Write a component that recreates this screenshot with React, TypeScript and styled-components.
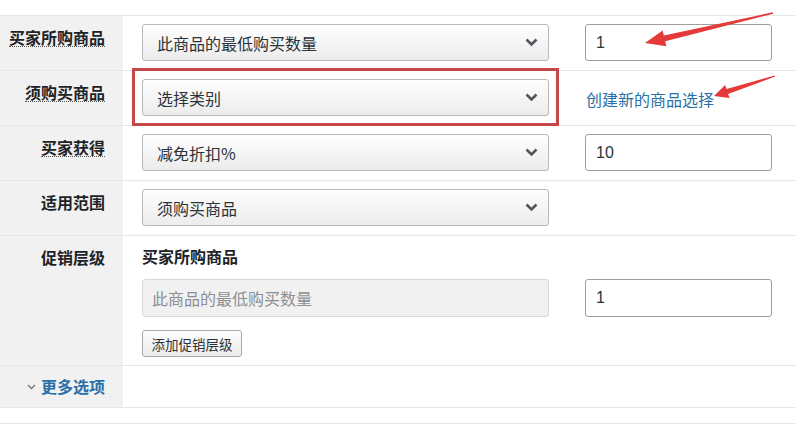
import styled, { createGlobalStyle } from 'styled-components';

const GlobalStyle = createGlobalStyle`
  body {
    margin: 0;
    background: #fff;
    font-family: "Noto Sans CJK SC", "Liberation Sans", sans-serif;
    color: #1d2327;
  }
`;

const Page = styled.div`
  position: relative;
  width: 796px;
  height: 425px;
  overflow: hidden;
  padding-top: 15px;
  box-sizing: border-box;
`;

const Table = styled.div`
  border-top: 1px solid #e6e6e6;
`;

const Row = styled.div`
  display: grid;
  grid-template-columns: 123px 1fr;
  border-bottom: 1px solid #e6e6e6;
`;

const Th = styled.div<{ $short?: boolean }>`
  background: #f1f1f1;
  text-align: right;
  font-size: 16px;
  line-height: 17px;
  padding: ${(p) => (p.$short ? '12px 18px 12px 0' : '13px 18px 0 0')};
`;

const Label = styled.span<{ $tip?: boolean }>`
  display: inline-block;
  font-size: 16px;
  font-weight: 700;
  line-height: 17px;
  color: #1d2327;
  border-bottom: 1px dotted ${(p) => (p.$tip ? '#555' : 'transparent')};
`;

const Td = styled.div<{ $stack?: boolean }>`
  display: flex;
  flex-direction: ${(p) => (p.$stack ? 'column' : 'row')};
  align-items: ${(p) => (p.$stack ? 'flex-start' : 'center')};
  gap: ${(p) => (p.$stack ? '0' : '36px')};
  padding: ${(p) => (p.$stack ? '8px 0 8px 19px' : '8px 0 9px 19px')};
`;

const Select = styled.div`
  width: 407px;
  height: 37px;
  box-sizing: border-box;
  display: flex;
  align-items: center;
  justify-content: space-between;
  padding: 0 10px 0 14px;
  border: 1px solid #b9b9b9;
  border-radius: 3px;
  background: linear-gradient(#fefefe, #ececec);
  font-size: 16px;
  color: #2c3338;
`;

const Highlight = styled.div`
  position: relative;
  &::after {
    content: '';
    position: absolute;
    top: -11px;
    left: -10px;
    right: -10px;
    bottom: -10px;
    border: 3px solid #c4474a;
    pointer-events: none;
  }
`;

const Input = styled.div<{ $disabled?: boolean; $tall?: boolean }>`
  width: ${(p) => (p.$disabled ? '407px' : '187px')};
  height: ${(p) => (p.$tall ? '38px' : '37px')};
  box-sizing: border-box;
  display: flex;
  align-items: center;
  padding-left: ${(p) => (p.$disabled ? '9px' : '10px')};
  border: 1px solid ${(p) => (p.$disabled ? '#d8d8d8' : '#9f9f9f')};
  border-radius: 3px;
  background: ${(p) => (p.$disabled ? '#f1f1f1' : '#fff')};
  color: ${(p) => (p.$disabled ? '#8c8f94' : '#2c3338')};
  font-family: "Liberation Sans", "Noto Sans CJK SC", sans-serif;
  font-size: 16px;
`;

const Link = styled.a`
  font-size: 16px;
  color: #2a6fa8;
  text-decoration: none;
  margin-left: 1px;
  padding-top: 3px;
`;

const SubHeading = styled.div`
  font-size: 16px;
  font-weight: 700;
  line-height: 22px;
  margin-top: 1px;
`;

const FieldLine = styled.div`
  display: flex;
  gap: 36px;
  margin-top: 12px;
`;

const Button = styled.button`
  margin-top: 13px;
  height: 27px;
  width: 100px;
  padding: 0;
  border: 1px solid #a9a9a9;
  border-radius: 3px;
  background: linear-gradient(#fdfdfd, #ececec);
  font-family: "Noto Sans CJK SC", sans-serif;
  font-size: 13.5px;
  color: #2c3338;
`;

const MoreToggle = styled.a`
  display: flex;
  justify-content: flex-end;
  align-items: center;
  gap: 5px;
  height: 17px;
  font-size: 16px;
  font-weight: 700;
  line-height: 17px;
  color: #2a6fa8;
  text-decoration: none;
`;

const FooterLine = styled.div`
  margin-top: 15px;
  border-top: 1px solid #e6e6e6;
`;

const Overlay = styled.svg`
  position: absolute;
  left: 0;
  top: 0;
  pointer-events: none;
`;

function Chevron() {
  return (
    <svg width="13" height="9" viewBox="0 0 13 9">
      <path d="M1.5 1.5 L6.5 6.5 L11.5 1.5" fill="none" stroke="#50575e" strokeWidth="2.6" />
    </svg>
  );
}

function DropDown({ value }: { value: string }) {
  return (
    <Select>
      <span>{value}</span>
      <Chevron />
    </Select>
  );
}

export default function App() {
  return (
    <Page>
      <GlobalStyle />
      <Table>
        <Row>
          <Th><Label $tip>买家所购商品</Label></Th>
          <Td>
            <DropDown value="此商品的最低购买数量" />
            <Input>1</Input>
          </Td>
        </Row>
        <Row>
          <Th><Label $tip>须购买商品</Label></Th>
          <Td>
            <Highlight>
              <DropDown value="选择类别" />
            </Highlight>
            <Link href="#">创建新的商品选择</Link>
          </Td>
        </Row>
        <Row>
          <Th><Label $tip>买家获得</Label></Th>
          <Td>
            <DropDown value="减免折扣%" />
            <Input>10</Input>
          </Td>
        </Row>
        <Row>
          <Th><Label>适用范围</Label></Th>
          <Td>
            <DropDown value="须购买商品" />
          </Td>
        </Row>
        <Row>
          <Th><Label>促销层级</Label></Th>
          <Td $stack>
            <SubHeading>买家所购商品</SubHeading>
            <FieldLine>
              <Input $disabled $tall>此商品的最低购买数量</Input>
              <Input $tall>1</Input>
            </FieldLine>
            <Button>添加促销层级</Button>
          </Td>
        </Row>
        <Row>
          <Th $short>
            <MoreToggle href="#">
              <svg width="9" height="6" viewBox="0 0 9 6">
                <path d="M1 1 L4.5 4.5 L8 1" fill="none" stroke="#7a7a7a" strokeWidth="1.4" />
              </svg>
              更多选项
            </MoreToggle>
          </Th>
          <div />
        </Row>
      </Table>
      <FooterLine />
      <Overlay width="796" height="425" viewBox="0 0 796 425">
        <polygon
          fill="#e53a3a"
          points="645,43 662.7,30.6 663.8,35.5 772.8,12.3 773.2,13.7 665.2,41.3 666.3,46.2"
        />
        <polygon
          fill="#e53a3a"
          points="714,96 725.1,84.9 726.5,89.1 774.8,75.4 775.2,76.6 728.1,93.9 729.5,98.1"
        />
      </Overlay>
    </Page>
  );
}
